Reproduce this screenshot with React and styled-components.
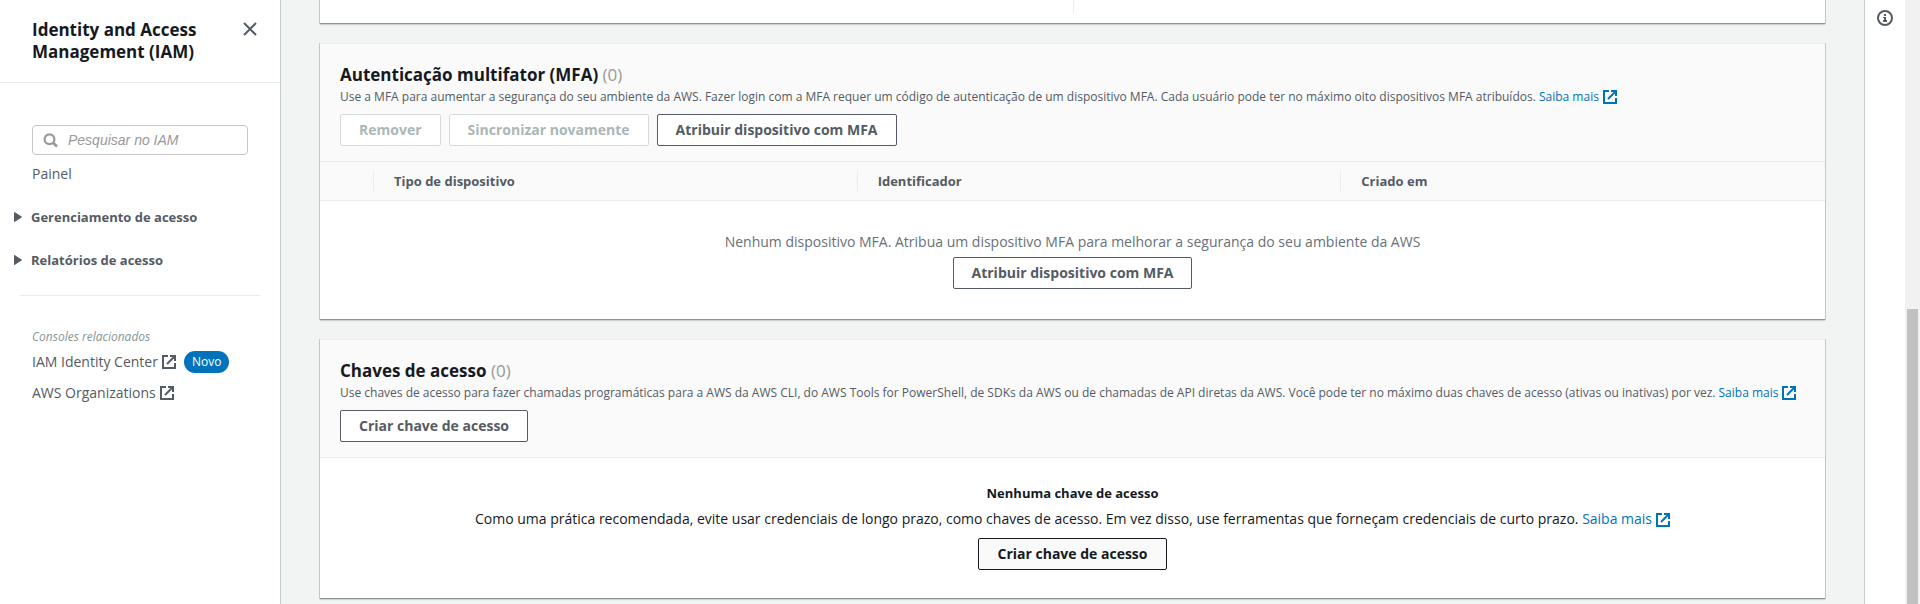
import React from "react";
import styled, { createGlobalStyle } from "styled-components";

const GlobalStyle = createGlobalStyle`
  *, *::before, *::after { box-sizing: border-box; }
  body {
    margin: 0;
    background: #f2f3f3;
    color: #16191f;
    font-family: "Open Sans", "Noto Sans", sans-serif;
    font-size: 14px;
    line-height: 22px;
  }
  h1, h2, h3, p, ul { margin: 0; padding: 0; }
`;

const Page = styled.div`
  display: flex;
  min-height: 100vh;
`;

const Sidebar = styled.aside`
  flex: 0 0 281px;
  min-width: 0;
  background: #fff;
  border-right: 1px solid #c4cccc;
`;

const SidebarHeader = styled.header`
  display: flex;
  align-items: flex-start;
  justify-content: space-between;
  padding: 19px 20px 19px 32px;
  border-bottom: 1px solid #eaeded;
`;

const SidebarTitle = styled.h1`
  font-size: 17px;
  line-height: 22px;
  font-weight: 700;
  width: 180px;
`;

const IconButton = styled.button`
  display: flex;
  padding: 2px;
  border: 0;
  background: none;
  color: #545b64;
  cursor: pointer;
`;

const SearchBox = styled.label`
  display: flex;
  align-items: center;
  gap: 10px;
  height: 30px;
  margin: 42px 32px 8px;
  padding: 0 10px;
  border: 1px solid #c6c6c6;
  border-radius: 4px;
  color: #999;
`;

const SearchInput = styled.input`
  flex: 1;
  min-width: 0;
  padding: 0;
  border: 0;
  outline: 0;
  background: none;
  font: 14px "Liberation Sans", Arial, sans-serif;
  &::placeholder {
    color: #999;
    font-style: italic;
    opacity: 1;
  }
`;

const Nav = styled.nav`
  color: #545b64;
`;

const NavLink = styled.a`
  display: inline-flex;
  align-items: center;
  gap: 4px;
  color: #545b64;
  text-decoration: none;
`;

const NavHome = styled.div`
  height: 22px;
  padding: 0 32px;
`;

const NavGroup = styled.button`
  display: flex;
  align-items: center;
  gap: 9px;
  width: 100%;
  height: 22px;
  margin: 21px 0 0;
  padding: 0 14px;
  border: 0;
  background: none;
  color: #545b64;
  font: inherit;
  font-size: 13px;
  font-weight: 700;
  cursor: pointer;
`;

const Divider = styled.hr`
  margin: 24px 20px 30px;
  border: 0;
  border-top: 1px solid #eaeded;
`;

const Related = styled.section`
  padding: 0 32px;
`;

const RelatedTitle = styled.h3`
  color: #879596;
  font-size: 12px;
  line-height: 22px;
  font-weight: 400;
  font-style: italic;
`;

const RelatedRow = styled.div`
  display: flex;
  align-items: center;
  gap: 8px;
  height: 31px;
  &:first-of-type { margin-top: -2px; }
`;

const Badge = styled.span`
  padding: 0 8px;
  border-radius: 11px;
  background: #0073bb;
  color: #fff;
  font-size: 12px;
  line-height: 22px;
`;

const Main = styled.main`
  flex: 1;
  min-width: 0;
  display: flex;
  flex-direction: column;
  gap: 19px;
  padding: 0 39px 5px;
`;

const Panel = styled.section`
  background: #fff;
  border-top: 1px solid #eaeded;
  box-shadow: 0 1px 1px 0 rgba(0, 28, 36, 0.15), 1px 0 0 0 #c4cccc,
    -1px 0 0 0 #c4cccc;
  border-bottom: 1px solid #879596;
`;

const SummaryPanel = styled(Panel)`
  display: grid;
  grid-template-columns: 1fr 1fr;
  border-top: 0;
  padding-bottom: 10px;
`;

const SummaryCell = styled.div`
  height: 13px;
  & + & { border-left: 1px solid #eaeded; }
`;

const PanelHeader = styled.header`
  padding: 20px 20px 15px;
  background: #fafafa;
  border-bottom: 1px solid #eaeded;
`;

const PanelTitle = styled.h2`
  font-size: 17px;
  line-height: 22px;
  font-weight: 700;
`;

const Count = styled.span`
  color: #999;
  font-weight: 400;
`;

const Description = styled.p`
  color: #545b64;
  font-size: 12px;
  line-height: 22px;
`;

const ButtonRow = styled.div`
  display: flex;
  gap: 8px;
  margin-top: 6px;
`;

const Button = styled.button`
  height: 32px;
  padding: 0 18px;
  vertical-align: top;
  border: 1px solid ${(p) => (p.$strong ? "#16191f" : "#545b64")};
  border-radius: 2px;
  background: ${(p) => (p.$strong ? "#fafafa" : "#fff")};
  color: ${(p) => (p.$strong ? "#16191f" : "#545b64")};
  font: inherit;
  font-weight: 700;
  cursor: pointer;
  &:disabled {
    border-color: #d5dbdb;
    background: #fff;
    color: #aab7b8;
    cursor: default;
  }
`;

const Link = styled.a`
  color: #0073bb;
  text-decoration: none;
  white-space: nowrap;
  svg { margin-left: 4px; vertical-align: -3px; }
`;

const Table = styled.table`
  width: 100%;
  table-layout: fixed;
  border-collapse: separate;
  border-spacing: 0;
`;

const HeadCell = styled.th`
  width: ${(p) => (p.$narrow ? "54px" : "auto")};
  height: 39px;
  padding: 0;
  background: #fafafa;
  border-bottom: 1px solid #eaeded;
  color: #545b64;
  font-size: 13px;
  font-weight: 700;
  text-align: left;
`;

const HeadLabel = styled.div`
  height: 20px;
  padding-left: 20px;
  line-height: 20px;
  border-right: ${(p) => (p.$last ? "0" : "1px solid #eaeded")};
`;

const EmptyCell = styled.td`
  padding: 30px 20px;
  color: #687078;
  text-align: center;
`;

const EmptyText = styled.p`
  margin-bottom: 4px;
`;

const EmptyState = styled.div`
  display: flex;
  flex-direction: column;
  align-items: center;
  padding: 24px 20px 28px;
  text-align: center;
`;

const EmptyTitle = styled.h3`
  margin-bottom: 4px;
  font-size: 13px;
  line-height: 22px;
  font-weight: 700;
`;

const EmptyBody = styled.p`
  margin-bottom: 8px;
`;

const HelpRail = styled.aside`
  flex: 0 0 41px;
  display: flex;
  justify-content: center;
  align-items: flex-start;
  padding-top: 8px;
  background: #fff;
  border-left: 1px solid #c4cccc;
`;

const ScrollTrack = styled.div`
  flex: 0 0 15px;
  display: grid;
  grid-template-rows: 309fr 295fr;
  padding: 0 2px;
  background: #f1f1f1;
`;

const ScrollThumb = styled.div`
  grid-row: 2;
  background: #c1c1c1;
`;

const ExternalIcon = () => (
  <svg width="14" height="14" viewBox="0 0 14 14" fill="none" stroke="currentColor" strokeWidth="2" aria-hidden="true">
    <path d="M6 1H1v12h12V8" />
    <path d="M8 1h5v5" />
    <path d="M13 1L5 9" />
  </svg>
);

const CloseIcon = () => (
  <svg width="16" height="16" viewBox="0 0 16 16" fill="none" stroke="currentColor" strokeWidth="2" aria-hidden="true">
    <path d="M2 2l12 12M14 2L2 14" />
  </svg>
);

const SearchIcon = () => (
  <svg width="15" height="15" viewBox="0 0 15 15" fill="none" stroke="currentColor" strokeWidth="2.2" aria-hidden="true">
    <circle cx="6.5" cy="6.3" r="4.9" />
    <path d="M10 9.8L14 13.6" strokeWidth="2.8" />
  </svg>
);

const CaretIcon = () => (
  <svg width="8" height="10" viewBox="0 0 8 10" fill="currentColor" stroke="currentColor" strokeLinejoin="round" aria-hidden="true">
    <path d="M0.5 0.5L7.5 5L0.5 9.5z" />
  </svg>
);

const InfoIcon = () => (
  <svg width="16" height="16" viewBox="0 0 16 16" fill="none" aria-hidden="true">
    <circle cx="8" cy="8" r="7" stroke="currentColor" strokeWidth="2" />
    <path d="M7 4h2v2H7zM6 7h3v3h1v2H6v-2h1V8H6z" fill="currentColor" />
  </svg>
);

const LearnMore = () => (
  <Link href="#saiba-mais">
    Saiba mais
    <ExternalIcon />
  </Link>
);

export default function App() {
  return (
    <>
      <GlobalStyle />
      <Page>
        <Sidebar>
          <SidebarHeader>
            <SidebarTitle>Identity and Access Management (IAM)</SidebarTitle>
            <IconButton aria-label="Fechar">
              <CloseIcon />
            </IconButton>
          </SidebarHeader>
          <SearchBox>
            <SearchIcon />
            <SearchInput type="text" placeholder="Pesquisar no IAM" aria-label="Pesquisar no IAM" />
          </SearchBox>
          <Nav>
            <NavHome>
              <NavLink href="#painel">Painel</NavLink>
            </NavHome>
            <NavGroup>
              <CaretIcon />
              Gerenciamento de acesso
            </NavGroup>
            <NavGroup>
              <CaretIcon />
              Relatórios de acesso
            </NavGroup>
          </Nav>
          <Divider />
          <Related>
            <RelatedTitle>Consoles relacionados</RelatedTitle>
            <RelatedRow>
              <NavLink href="#identity-center">
                IAM Identity Center
                <ExternalIcon />
              </NavLink>
              <Badge>Novo</Badge>
            </RelatedRow>
            <RelatedRow>
              <NavLink href="#organizations">
                AWS Organizations
                <ExternalIcon />
              </NavLink>
            </RelatedRow>
          </Related>
        </Sidebar>

        <Main>
          <SummaryPanel>
            <SummaryCell />
            <SummaryCell />
          </SummaryPanel>

          <Panel>
            <PanelHeader>
              <PanelTitle>
                Autenticação multifator (MFA) <Count>(0)</Count>
              </PanelTitle>
              <Description>
                Use a MFA para aumentar a segurança do seu ambiente da AWS. Fazer login com a MFA requer um código de
                autenticação de um dispositivo MFA. Cada usuário pode ter no máximo oito dispositivos MFA atribuídos.{" "}
                <LearnMore />
              </Description>
              <ButtonRow>
                <Button disabled>Remover</Button>
                <Button disabled>Sincronizar novamente</Button>
                <Button>Atribuir dispositivo com MFA</Button>
              </ButtonRow>
            </PanelHeader>
            <Table>
              <thead>
                <tr>
                  <HeadCell $narrow>
                    <HeadLabel />
                  </HeadCell>
                  <HeadCell>
                    <HeadLabel>Tipo de dispositivo</HeadLabel>
                  </HeadCell>
                  <HeadCell>
                    <HeadLabel>Identificador</HeadLabel>
                  </HeadCell>
                  <HeadCell>
                    <HeadLabel $last>Criado em</HeadLabel>
                  </HeadCell>
                </tr>
              </thead>
              <tbody>
                <tr>
                  <EmptyCell colSpan={4}>
                    <EmptyText>
                      Nenhum dispositivo MFA. Atribua um dispositivo MFA para melhorar a segurança do seu ambiente da AWS
                    </EmptyText>
                    <Button>Atribuir dispositivo com MFA</Button>
                  </EmptyCell>
                </tr>
              </tbody>
            </Table>
          </Panel>

          <Panel>
            <PanelHeader>
              <PanelTitle>
                Chaves de acesso <Count>(0)</Count>
              </PanelTitle>
              <Description>
                Use chaves de acesso para fazer chamadas programáticas para a AWS da AWS CLI, do AWS Tools for
                PowerShell, de SDKs da AWS ou de chamadas de API diretas da AWS. Você pode ter no máximo duas chaves de
                acesso (ativas ou inativas) por vez. <LearnMore />
              </Description>
              <ButtonRow>
                <Button>Criar chave de acesso</Button>
              </ButtonRow>
            </PanelHeader>
            <EmptyState>
              <EmptyTitle>Nenhuma chave de acesso</EmptyTitle>
              <EmptyBody>
                Como uma prática recomendada, evite usar credenciais de longo prazo, como chaves de acesso. Em vez
                disso, use ferramentas que forneçam credenciais de curto prazo. <LearnMore />
              </EmptyBody>
              <Button $strong>Criar chave de acesso</Button>
            </EmptyState>
          </Panel>
        </Main>

        <HelpRail>
          <IconButton aria-label="Informações">
            <InfoIcon />
          </IconButton>
        </HelpRail>
        <ScrollTrack>
          <ScrollThumb />
        </ScrollTrack>
      </Page>
    </>
  );
}
